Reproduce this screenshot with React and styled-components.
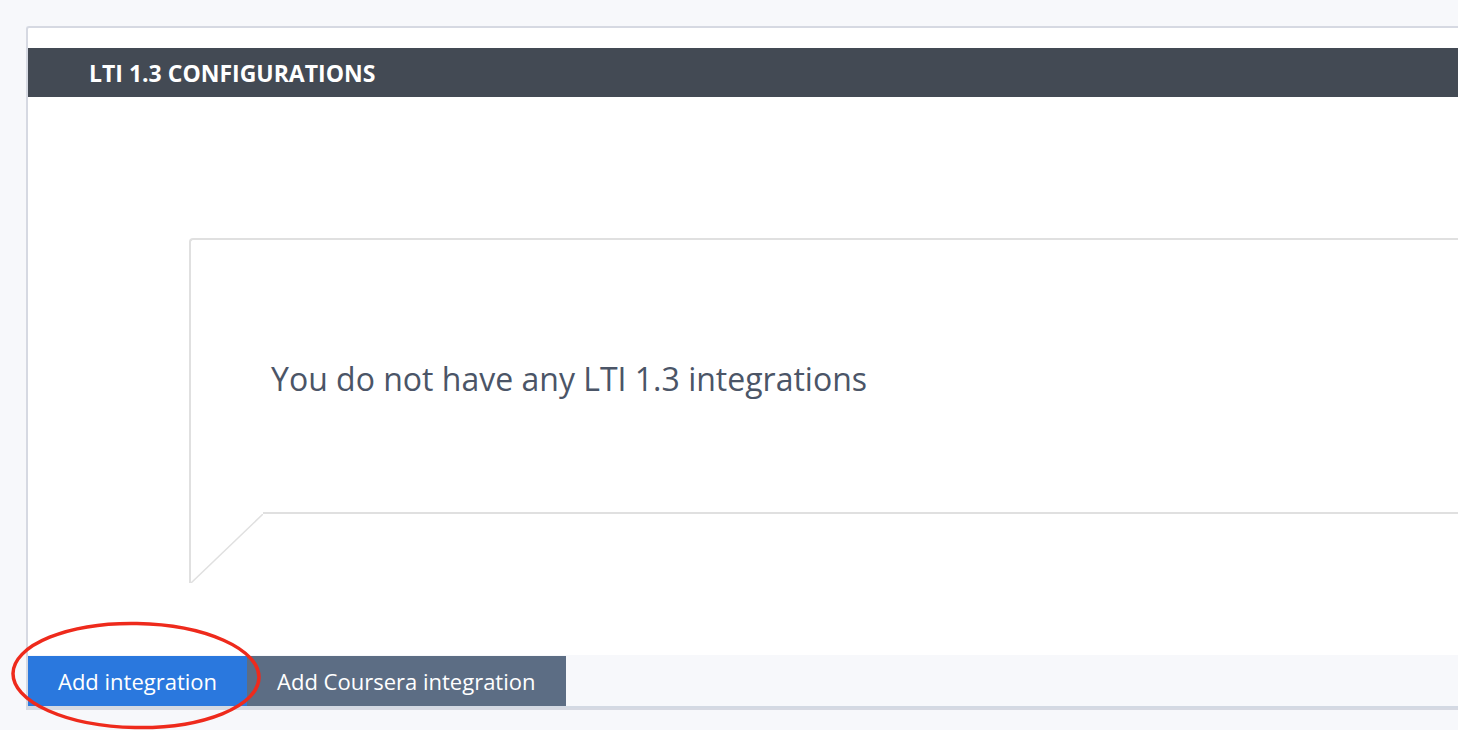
import React from "react";
import styled, { createGlobalStyle } from "styled-components";

const Global = createGlobalStyle`
  html, body { margin: 0; padding: 0; background: #f7f8fb; overflow: hidden; }
  body { font-family: "Open Sans", "Liberation Sans", sans-serif; }
`;

const Page = styled.div`
  position: relative;
  width: 1458px;
  height: 730px;
  padding: 26px 0 0 26px;
  box-sizing: border-box;
  background: #f7f8fb;
  overflow: hidden;
`;

const Card = styled.section`
  width: 1500px;
  border: 2px solid #d6d9e2;
  border-right: none;
  border-top-left-radius: 3px;
  background: #fff;
  padding-top: 20px;
  box-sizing: border-box;
`;

const Header = styled.h2`
  margin: 0;
  height: 49px;
  display: flex;
  align-items: center;
  padding-left: 61px;
  background: #434a54;
  color: #fff;
  font-size: 23px;
  font-weight: 700;
  letter-spacing: 0;
`;

const Body = styled.div`
  padding: 141px 0 72px 161px;
  background: #fff;
`;

const Bubble = styled.div`
  border-top: 2px solid #e0e0e0;
  border-left: 2px solid #e0e0e0;
  border-top-left-radius: 4px;
  display: flex;
  flex-direction: column;
`;

const Message = styled.p`
  margin: 0 0 0 72px;
  height: 274px;
  padding: 4px 0 0 8px;
  display: flex;
  align-items: center;
  border-bottom: 2px solid #e0e0e0;
  color: #4b5567;
  font-size: 32px;
  font-weight: 400;
  box-sizing: border-box;
`;

const Tail = styled.svg`
  display: block;
  width: 72px;
  height: 69px;
`;

const Footer = styled.div`
  display: flex;
  background: #f7f8fb;
  border-bottom: 2px solid #d3d9e3;
  padding-top: 1px;
`;

const Button = styled.button`
  height: 50px;
  padding: 0 30px;
  border: none;
  margin: 0;
  font-family: "Open Sans", "Liberation Sans", sans-serif;
  font-size: 22px;
  color: #fff;
  background: ${(p) => (p.$primary ? "#2a78de" : "#5c6d84")};
  cursor: pointer;
`;

const Annotation = styled.svg`
  position: absolute;
  left: 0;
  top: 600px;
  width: 300px;
  height: 130px;
  pointer-events: none;
`;

export default function App() {
  return (
    <Page>
      <Global />
      <Card>
        <Header>LTI 1.3 CONFIGURATIONS</Header>
        <Body>
          <Bubble>
            <Message>You do not have any LTI 1.3 integrations</Message>
            <Tail viewBox="0 0 72 69">
              <line x1="72" y1="0" x2="0" y2="69" stroke="#e0e0e0" strokeWidth="1.5" />
            </Tail>
          </Bubble>
        </Body>
        <Footer>
          <Button $primary>Add integration</Button>
          <Button>Add Coursera integration</Button>
        </Footer>
      </Card>
      <Annotation viewBox="0 0 300 130">
        <ellipse cx="136" cy="75.5" rx="123" ry="52" fill="none" stroke="#ee2a1c" strokeWidth="3.5" transform="rotate(1 136 75.5)" />
      </Annotation>
    </Page>
  );
}
